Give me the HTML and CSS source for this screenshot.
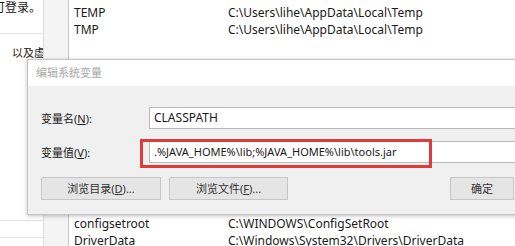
FILE: index.html
```html
<!DOCTYPE html>
<html>
<head>
<meta charset="utf-8">
<link rel="stylesheet" href="styles.css">
</head>
<body>
<div class="page">
  <div class="side">
    <div class="side-top"><span class="cut">可登录。</span></div>
    <div class="side-mid">以及虚</div>
    <div class="side-fill"></div>
    <div class="side-line"></div>
    <div class="side-line"></div>
  </div>
  <div class="strip"></div>
  <div class="list">
    <div class="row"><span class="name">TEMP</span><span class="val">C:\Users\lihe\AppData\Local\Temp</span></div>
    <div class="row"><span class="name">TMP</span><span class="val">C:\Users\lihe\AppData\Local\Temp</span></div>
    <div class="list-fill"></div>
    <div class="row"><span class="name">configsetroot</span><span class="val">C:\WINDOWS\ConfigSetRoot</span></div>
    <div class="row"><span class="name">DriverData</span><span class="val">C:\Windows\System32\Drivers\DriverData</span></div>
  </div>

  <div class="dialog">
    <div class="title">编辑系统变量</div>
    <div class="body">
      <div class="field">
        <span class="label">变量名(<u>N</u>):</span>
        <div class="input">CLASSPATH</div>
      </div>
      <div class="field">
        <span class="label">变量值(<u>V</u>):</span>
        <div class="input value">.%JAVA_HOME%\lib;%JAVA_HOME%\lib\tools.jar</div>
      </div>
      <div class="buttons">
        <div class="btn b1">浏览目录(<u>D</u>)...</div>
        <div class="btn b2">浏览文件(<u>F</u>)...</div>
        <div class="btn ok">确定</div>
      </div>
    </div>
  </div>
  <div class="highlight"></div>
</div>
</body>
</html>
```

FILE: styles.css
```css
html, body {
  margin: 0;
  padding: 0;
  background: #ffffff;
}
.page {
  position: relative;
  width: 515px;
  height: 246px;
  overflow: hidden;
  display: flex;
  font-family: "Noto Sans", "Noto Sans CJK SC", sans-serif;
  color: #1a1a1a;
}
.side {
  width: 43px;
  display: flex;
  flex-direction: column;
  font-size: 11px;
}
.side-top {
  height: 32px;
  border-bottom: 1px solid #e4e4e4;
  padding-top: 1px;
  line-height: 14px;
  white-space: nowrap;
  font-size: 12px;
}
.cut {
  display: inline-block;
  margin-left: -7px;
}
.side-mid {
  padding: 11px 0 0 12px;
  line-height: 16px;
  white-space: nowrap;
  height: 30px;
  box-sizing: border-box;
}
.side-fill {
  flex: 1;
}
.side-line {
  height: 16px;
  border-top: 1px solid #e4e4e4;
}
.side-line:last-child {
  height: 8px;
}
.strip {
  width: 24px;
  background: #f4f4f4;
  border-left: 1px solid #dcdcdc;
  border-right: 1px solid #c8c8c8;
}
.list {
  flex: 1;
  display: flex;
  flex-direction: column;
  padding-top: 4px;
  font-size: 12px;
}
.row {
  height: 17px;
  line-height: 17px;
  display: flex;
  white-space: nowrap;
}
.name {
  width: 154px;
  padding-left: 5px;
  flex: none;
}
.list-fill {
  flex: 1;
}
.list .row:last-child {
  height: 14px;
}

.dialog {
  position: absolute;
  left: 27px;
  top: 59px;
  width: 520px;
  height: 154px;
  background: #f0f0f0;
  border: 1px solid #c4c4c4;
  box-shadow: 0 1px 4px rgba(0, 0, 0, 0.25);
  display: flex;
  flex-direction: column;
}
.title {
  height: 26px;
  background: #ffffff;
  font-size: 11px;
  color: #a8a8a8;
  padding-left: 8px;
  line-height: 25px;
}
.body {
  flex: 1;
  padding: 21px 0 0 13px;
  display: flex;
  flex-direction: column;
  gap: 12px;
}
.field {
  display: flex;
  align-items: center;
}
.label {
  width: 108px;
  font-size: 11px;
  color: #1a1a1a;
}
.label u, .btn u {
  text-decoration: underline;
}
.input {
  flex: 1;
  height: 20px;
  background: #ffffff;
  border: 1px solid #b9b9b9;
  font-size: 12px;
  line-height: 20px;
  padding-left: 4px;
  white-space: nowrap;
}
.input.value {
  font-size: 11px;
}
.buttons {
  display: flex;
  gap: 8px;
  margin-top: 2px;
}
.btn {
  height: 21px;
  background: #e5e5e5;
  border: 1px solid #c6c6c6;
  font-size: 11px;
  color: #333333;
  text-align: center;
  line-height: 21px;
}
.b1 { width: 118px; }
.b2 { width: 117px; }
.ok {
  width: 62px;
  margin-left: 154px;
}
.highlight {
  position: absolute;
  left: 140px;
  top: 139px;
  width: 286px;
  height: 23px;
  border: 3px solid #e23a3a;
}
```
